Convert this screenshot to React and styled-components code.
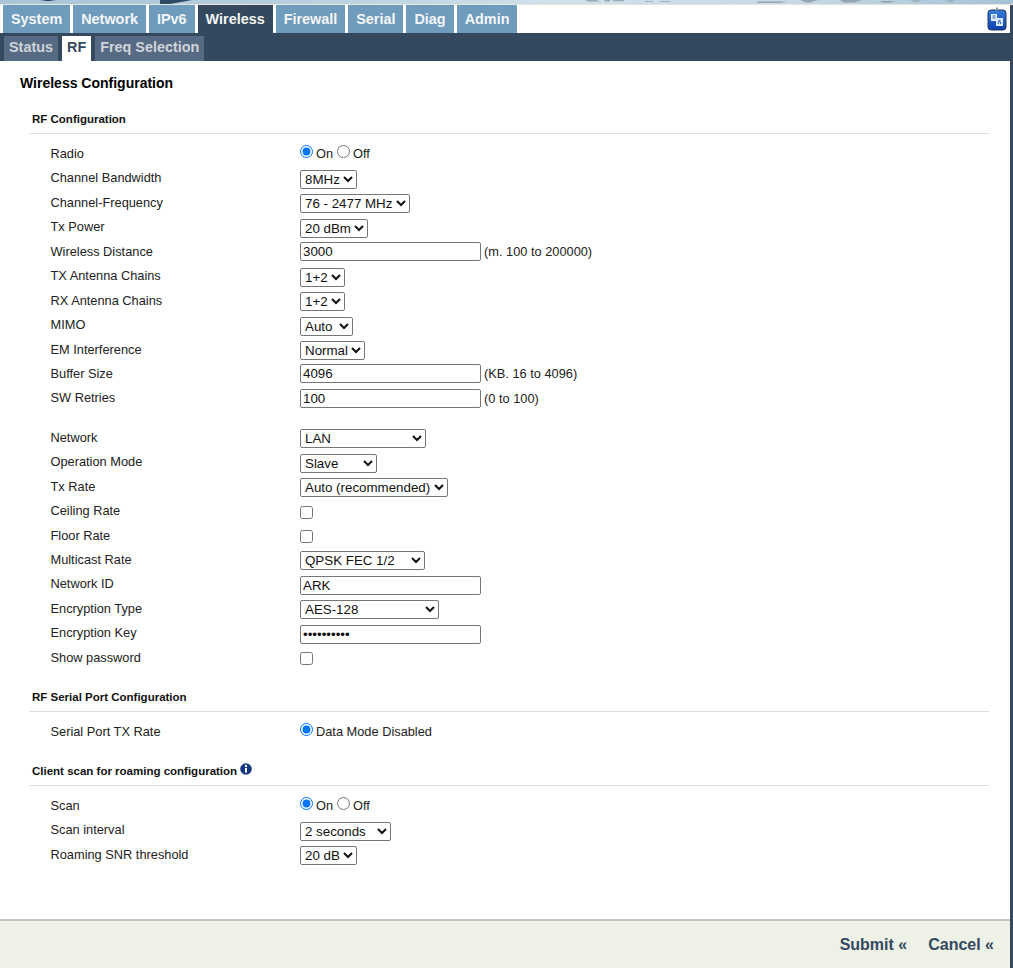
import React from "react";
import styled, { createGlobalStyle } from "styled-components";

const Global = createGlobalStyle`
  html, body { margin: 0; padding: 0; background: #34495e; }
  body { font-family: "Liberation Sans", Arial, sans-serif; font-size: 12.8px; color: #222; }
`;
const Page = styled.div`
  width: 1013px; height: 968px; display: flex; flex-direction: column; overflow: hidden;
  background: #34495e;
`;
const Banner = styled.svg`
  display: block; width: 1013px; height: 5px; flex: none;
`;
const TopBar = styled.div`
  width: 1010px; height: 28px; flex: none; background: #fff; display: flex; justify-content: space-between;
  padding-left: 3px; box-sizing: border-box;
`;
const TopTabs = styled.div`display: flex; gap: 3px; align-items: stretch;`;
const TopTab = styled.div`
  display: flex; align-items: center; padding: 0 8px 1px; font-size: 14.4px; font-weight: 700; color: #f4f6f8;
  background: ${p => (p.$active ? "#34495e" : "#6f9bbd")};
`;
const TranslateIcon = styled.svg`width: 20px; height: 24px; margin: 2px 3px 0 0; flex: none;`;
const SubBar = styled.div`
  width: 1010px; height: 28px; flex: none; background: #34495e; display: flex; gap: 4px; padding: 3px 0 0 4px; box-sizing: border-box;
`;
const SubTab = styled.div`
  display: flex; align-items: center; padding: 0 5px 3px; font-size: 14.4px; font-weight: 700;
  color: ${p => (p.$active ? "#34495e" : "#cfd4da")};
  background: ${p => (p.$active ? "#fff" : "#566a83")};
`;
const Main = styled.div`
  width: 1010px; flex: 1; background: #fff; padding: 14px 21px 0 20px; box-sizing: border-box; min-height: 0;
`;
const Title = styled.h1`
  margin: 0 0 20px; font-size: 14px; line-height: 16px; font-weight: 700; color: #000;
`;
const Section = styled.section`margin: ${p => p.$top || 0}px 0 0 9px;`;
const SectionTitle = styled.h2`
  margin: 0; height: 23px; padding: 1px 0 0 3px; box-sizing: border-box; border-bottom: 1px solid #ddd;
  font-size: 11.5px; line-height: 15px; font-weight: 700; color: #111; display: flex; align-items: flex-start; gap: 3px;
`;
const InfoIcon = styled.svg`width: 12px; height: 12px; flex: none; margin-top: -1px;`;
const Rows = styled.div`padding-top: 7px; margin-left: 21.5px;`;
const Row = styled.div`
  height: 24.45px; display: flex; align-items: flex-start; margin-top: ${p => p.$gap || 0}px;
`;
const Label = styled.div`
  width: 249.5px; flex: none; font-size: 12.8px; line-height: 15px; padding-top: 5px; color: #222;
`;
const Control = styled.div`display: flex; align-items: center; padding-top: ${p => p.$top ?? 4.5}px; font-size: 12.8px; color: #222;`;
const Select = styled.select`
  width: ${p => p.$w}px; height: 19px; font: 13.33px "Liberation Sans", Arial, sans-serif; padding: 0; margin: 0;
  background: #fff; color: #111; border: 1px solid #767676; border-radius: 2px; box-sizing: border-box;
`;
const Input = styled.input`
  width: 181px; height: 19px; font: 13.33px "Liberation Sans", Arial, sans-serif; padding: 1px 2px; margin: 0;
  border: 1px solid #767676; border-radius: 2px; box-sizing: border-box; color: #111;
`;
const Hint = styled.span`margin-left: 3px;`;
const Radio = styled.input.attrs({ type: "radio" })`width: 13px; height: 13px; margin: 0 3px 0 0; position: relative; top: -2px;`;
const RadioText = styled.label`margin-right: 4px; line-height: 15px;`;
const Check = styled.input.attrs({ type: "checkbox" })`width: 13px; height: 13px; margin: 0;`;
const Footer = styled.div`
  width: 1010px; height: 49px; flex: none; background: #eef1e6; border-top: 2px solid #c2c2b6; box-sizing: border-box;
  display: flex; justify-content: flex-end; align-items: center; gap: 21px; padding: 0 16px 0 0;
`;
const FootLink = styled.a`font-size: 16px; font-weight: 700; color: #34495e;`;

const Sel = ({ w, v }) => <Select $w={w} defaultValue={v}><option>{v}</option></Select>;

const OnOff = ({ name }) => (
  <>
    <Radio name={name} defaultChecked /><RadioText>On</RadioText>
    <Radio name={name} /><RadioText>Off</RadioText>
  </>
);

const tabs = ["System", "Network", "IPv6", "Wireless", "Firewall", "Serial", "Diag", "Admin"];

export default function App() {
  return (
    <Page>
      <Global />
      <Banner viewBox="0 0 1013 5" preserveAspectRatio="none">
        <defs>
          <linearGradient id="b" x1="0" x2="1" y1="0" y2="0">
            <stop offset="0" stopColor="#a9c5d8" />
            <stop offset="0.25" stopColor="#b4cddd" />
            <stop offset="0.55" stopColor="#cfe0ea" />
            <stop offset="0.8" stopColor="#c4d8e4" />
            <stop offset="1" stopColor="#a6c2d6" />
          </linearGradient>
        </defs>
        <rect width="1013" height="5" fill="url(#b)" />
        <rect y="4" width="1013" height="1" fill="#e6e6d8" />
        <path d="M40 0h16l-8 1.2zM160 0h32l-22 4h-10z" fill="#2f4a66" />
        <path d="M585 0h12l3 1.6h-12zM604 0h6v1.6h-5zM612 0h12v1.2h-10zM645 1h8v.8h-8zM660 1h10v.8h-10zM757 1.5h30l-6 1.5h-24zM800 0h18l-8 2.4h-4zM840 0h22l-8 2.4h-10zM880 1h16l-6 1.5h-8zM910 .5h12l-6 1.5zM945 .5h10l-4 1.5z" fill="#7a868d" opacity=".6" />
      </Banner>
      <TopBar>
        <TopTabs>
          {tabs.map(t => <TopTab key={t} $active={t === "Wireless"}>{t}</TopTab>)}
        </TopTabs>
        <TranslateIcon viewBox="0 0 20 24">
          <defs>
            <linearGradient id="tr" x1="0" x2="0" y1="0" y2="1">
              <stop offset="0" stopColor="#3a7fe0" />
              <stop offset="1" stopColor="#0a3fae" />
            </linearGradient>
          </defs>
          <rect x="1" y="3" width="18" height="20" rx="3" fill="url(#tr)" stroke="#263a5a" />
          <rect x="9" y="0.5" width="2" height="3" fill="#8a97aa" />
          <rect x="4" y="7" width="6" height="7" fill="#e8f0fb" />
          <rect x="9" y="11" width="7" height="8" fill="#dbe8fa" />
          <path d="M5.5 9h3M5.5 11h3M11 17l1.5-4 1.5 4" stroke="#1c58b8" fill="none" strokeWidth="1" />
        </TranslateIcon>
      </TopBar>
      <SubBar>
        <SubTab>Status</SubTab>
        <SubTab $active>RF</SubTab>
        <SubTab>Freq Selection</SubTab>
      </SubBar>
      <Main>
        <Title>Wireless Configuration</Title>
        <Section>
          <SectionTitle>RF Configuration</SectionTitle>
          <Rows>
            <Row><Label>Radio</Label><Control $top={5}><OnOff name="radio" /></Control></Row>
            <Row><Label>Channel Bandwidth</Label><Control><Sel w={57} v="8MHz" /></Control></Row>
            <Row><Label>Channel-Frequency</Label><Control><Sel w={110} v="76 - 2477 MHz" /></Control></Row>
            <Row><Label>Tx Power</Label><Control><Sel w={68} v="20 dBm" /></Control></Row>
            <Row><Label>Wireless Distance</Label><Control $top={3.5}><Input defaultValue="3000" /><Hint>(m. 100 to 200000)</Hint></Control></Row>
            <Row><Label>TX Antenna Chains</Label><Control><Sel w={45} v="1+2" /></Control></Row>
            <Row><Label>RX Antenna Chains</Label><Control><Sel w={45} v="1+2" /></Control></Row>
            <Row><Label>MIMO</Label><Control><Sel w={53} v="Auto" /></Control></Row>
            <Row><Label>EM Interference</Label><Control><Sel w={65} v="Normal" /></Control></Row>
            <Row><Label>Buffer Size</Label><Control $top={3.5}><Input defaultValue="4096" /><Hint>(KB. 16 to 4096)</Hint></Control></Row>
            <Row><Label>SW Retries</Label><Control $top={3.5}><Input defaultValue="100" /><Hint>(0 to 100)</Hint></Control></Row>
            <Row $gap={15}><Label>Network</Label><Control><Sel w={126} v="LAN" /></Control></Row>
            <Row><Label>Operation Mode</Label><Control><Sel w={77} v="Slave" /></Control></Row>
            <Row><Label>Tx Rate</Label><Control><Sel w={148} v="Auto (recommended)" /></Control></Row>
            <Row><Label>Ceiling Rate</Label><Control $top={7.5}><Check /></Control></Row>
            <Row><Label>Floor Rate</Label><Control $top={7.5}><Check /></Control></Row>
            <Row><Label>Multicast Rate</Label><Control $top={4}><Sel w={125} v="QPSK FEC 1/2" /></Control></Row>
            <Row><Label>Network ID</Label><Control><Input defaultValue="ARK" /></Control></Row>
            <Row><Label>Encryption Type</Label><Control><Sel w={139} v="AES-128" /></Control></Row>
            <Row><Label>Encryption Key</Label><Control><Input type="password" defaultValue="1234567890" /></Control></Row>
            <Row><Label>Show password</Label><Control $top={7.5}><Check /></Control></Row>
          </Rows>
        </Section>
        <Section $top={19.6}>
          <SectionTitle>RF Serial Port Configuration</SectionTitle>
          <Rows>
            <Row><Label>Serial Port TX Rate</Label><Control $top={5}><Radio name="serial" defaultChecked /><RadioText>Data Mode Disabled</RadioText></Control></Row>
          </Rows>
        </Section>
        <Section $top={19.6}>
          <SectionTitle>
            Client scan for roaming configuration
            <InfoIcon viewBox="0 0 12 12">
              <circle cx="6" cy="6" r="5.8" fill="#14387f" />
              <circle cx="6" cy="3" r="1.2" fill="#fff" />
              <rect x="5" y="5" width="2" height="4.6" fill="#fff" />
            </InfoIcon>
          </SectionTitle>
          <Rows>
            <Row><Label>Scan</Label><Control $top={5}><OnOff name="scan" /></Control></Row>
            <Row><Label>Scan interval</Label><Control $top={5}><Sel w={91} v="2 seconds" /></Control></Row>
            <Row><Label>Roaming SNR threshold</Label><Control><Sel w={57} v="20 dB" /></Control></Row>
          </Rows>
        </Section>
      </Main>
      <Footer>
        <FootLink>Submit «</FootLink>
        <FootLink>Cancel «</FootLink>
      </Footer>
    </Page>
  );
}
